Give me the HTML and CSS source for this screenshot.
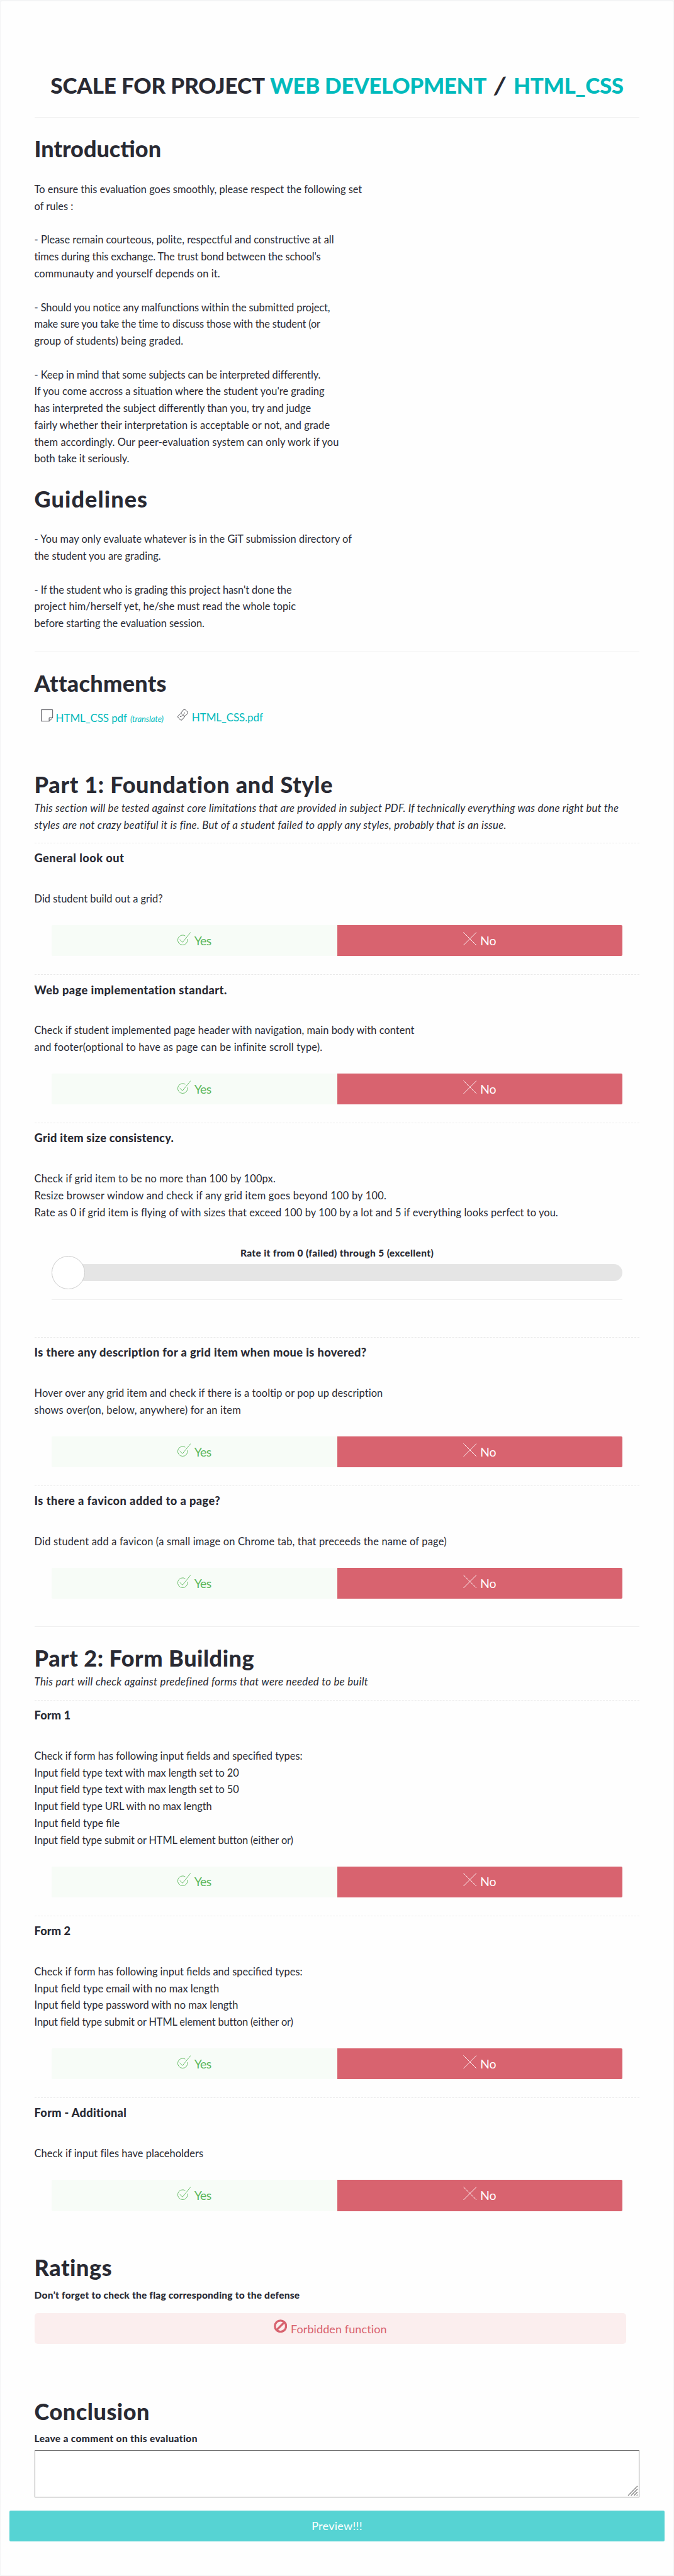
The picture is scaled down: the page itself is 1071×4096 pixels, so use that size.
FILE: index.html
```html
<!DOCTYPE html>
<html lang="en">
<head>
<meta charset="utf-8">
<title>Scale for project Web Development / HTML_CSS</title>
<link rel="stylesheet" href="styles.css">
</head>
<body>
<svg class="sprite" aria-hidden="true">
  <symbol id="i-check" viewBox="0 0 33 33"><path d="M19 9.3A12 12 0 1 0 24.4 17M5.5 18.5l6.8 6.6L32.2.6" /></symbol>
  <symbol id="i-cross" viewBox="0 0 33 33"><path d="M.6.6l31.8 31.8M32.4.6.6 32.4" /></symbol>
  <symbol id="i-note" viewBox="0 0 29 29"><path d="M.9.9h27v18.8l-8.4 8.4H.9zM19.5 28.1v-8.4h8.4" /></symbol>
  <symbol id="i-link" viewBox="0 0 28 28"><path d="M11.5 12.5l-1-1q-1.200-1.500 0-3L16 2q1.500-1.500 3.500 0L25 7.500q1.500 1.800 0 3.500l-5.500 5.800q-1.500 1.200-3 0l-1.300-1.200M16.500 15.500l1 1q1.200 1.500 0 3L12 26q-1.500 1.500-3.500 0L3 20.500q-1.500-1.800 0-3.500l5.500-5.800M9 17l-1 2.200M10 18.500l9-9.500" /></symbol>
  <symbol id="i-ban" viewBox="0 0 32 32"><circle cx="16" cy="16" r="13.300" /><path d="M6.800 25.200 25.200 6.800" /></symbol>
</svg>
<main class="sheet">
  <h1 class="title"><span class="t-a">SCALE FOR PROJECT</span><span class="accent t-b">WEB DEVELOPMENT</span><span class="slash">/</span><span class="accent t-c">HTML_CSS</span></h1>

  <section class="part ruled">
    <h2>Introduction</h2>
    <p class="text">To ensure this evaluation goes smoothly, please respect the following set<br>of rules :<br><br>- Please remain courteous, polite, respectful and constructive at all<br><span class="n10">times during this exchange. The trust bond between the school's</span><br><span class="w10">communauty and yourself depends on it.</span><br><br><span class="n10">- Should you notice any malfunctions within the submitted project,</span><br><span class="n20">make sure you take the time to discuss those with the student (or</span><br><span class="w15">group of students) being graded.</span><br><br><span class="n10">- Keep in mind that some subjects can be interpreted differently.</span><br>If you come accross a situation where the student you're grading<br>has interpreted the subject differently than you, try and judge<br><span class="w10">fairly whether their interpretation is acceptable or not, and grade</span><br><span class="w10">them accordingly. Our peer-evaluation system can only work if you</span><br><span class="n10">both take it seriously.</span></p>
    <h2 class="h-guidelines">Guidelines</h2>
    <p class="text"><span class="w05">- You may only evaluate whatever is in the GiT submission directory of</span><br>the student you are grading.<br><br><span class="n10">- If the student who is grading this project hasn't done the</span><br><span class="w05">project him/herself yet, he/she must read the whole topic</span><br><span class="n05">before starting the evaluation session.</span></p>
  </section>

  <section class="part ruled">
    <h2 class="h-short">Attachments</h2>
    <div class="files">
      <a class="file"><svg class="note"><use href="#i-note"/></svg>HTML_CSS pdf <em>(translate)</em></a>
      <a class="file"><svg class="link"><use href="#i-link"/></svg>HTML_CSS.pdf</a>
    </div>
  </section>

  <section class="part part-1">
    <h2 class="h-wide">Part 1: Foundation and Style</h2>
    <p class="lead">This section will be tested against core limitations that are provided in subject PDF. If technically everything was done right but the<br><span class="w25">styles are not crazy beatiful it is fine. But of a student failed to apply any styles, probably that is an issue.</span></p>

    <article class="item">
      <h3>General look out</h3>
      <p class="text">Did student build out a grid?</p>
      <div class="answer"><button class="yes"><svg><use href="#i-check"/></svg><span>Yes</span></button><button class="no"><svg><use href="#i-cross"/></svg><span>No</span></button></div>
    </article>
    <article class="item">
      <h3>Web page implementation standart.</h3>
      <p class="text"><span class="w05">Check if student implemented page header with navigation, main body with content</span><br><span class="w20">and footer(optional to have as page can be infinite scroll type).</span></p>
      <div class="answer"><button class="yes"><svg><use href="#i-check"/></svg><span>Yes</span></button><button class="no"><svg><use href="#i-cross"/></svg><span>No</span></button></div>
    </article>
    <article class="item">
      <h3 class="w25">Grid item size consistency.</h3>
      <p class="text"><span class="w15">Check if grid item to be no more than 100 by 100px.</span><br><span class="w25">Resize browser window and check if any grid item goes beyond 100 by 100.</span><br><span class="w10">Rate as 0 if grid item is flying of with sizes that exceed 100 by 100 by a lot and 5 if everything looks perfect to you.</span></p>
      <div class="rating">
        <div class="rating-label">Rate it from 0 (failed) through 5 (excellent)</div>
        <div class="track"><span class="knob"></span></div>
      </div>
    </article>
    <article class="item">
      <h3 class="w40">Is there any description for a grid item when moue is hovered?</h3>
      <p class="text"><span class="w10">Hover over any grid item and check if there is a tooltip or pop up description</span><br><span class="w20">shows over(on, below, anywhere) for an item</span></p>
      <div class="answer"><button class="yes"><svg><use href="#i-check"/></svg><span>Yes</span></button><button class="no"><svg><use href="#i-cross"/></svg><span>No</span></button></div>
    </article>
    <article class="item">
      <h3>Is there a favicon added to a page?</h3>
      <p class="text"><span class="w20">Did student add a favicon (a small image on Chrome tab, that preceeds the name of page)</span></p>
      <div class="answer"><button class="yes"><svg><use href="#i-check"/></svg><span>Yes</span></button><button class="no"><svg><use href="#i-cross"/></svg><span>No</span></button></div>
    </article>
  </section>

  <section class="part ruled part-2">
    <h2 class="h-mid">Part 2: Form Building</h2>
    <p class="lead"><span class="w30">This part will check against predefined forms that were needed to be built</span></p>

    <article class="item">
      <h3 class="w10">Form 1</h3>
      <p class="text">Check if form has following input fields and specified types:<br><span class="n10">Input field type text with max length set to 20</span><br><span class="n10">Input field type text with max length set to 50</span><br><span class="n10">Input field type URL with no max length</span><br>Input field type file<br><span class="n15">Input field type submit or HTML element button (either or)</span></p>
      <div class="answer"><button class="yes"><svg><use href="#i-check"/></svg><span>Yes</span></button><button class="no"><svg><use href="#i-cross"/></svg><span>No</span></button></div>
    </article>
    <article class="item">
      <h3 class="w10">Form 2</h3>
      <p class="text">Check if form has following input fields and specified types:<br>Input field type email with no max length<br>Input field type password with no max length<br><span class="n15">Input field type submit or HTML element button (either or)</span></p>
      <div class="answer"><button class="yes"><svg><use href="#i-check"/></svg><span>Yes</span></button><button class="no"><svg><use href="#i-cross"/></svg><span>No</span></button></div>
    </article>
    <article class="item">
      <h3 class="w30">Form - Additional</h3>
      <p class="text"><span class="w05">Check if input files have placeholders</span></p>
      <div class="answer"><button class="yes"><svg><use href="#i-check"/></svg><span>Yes</span></button><button class="no"><svg><use href="#i-cross"/></svg><span>No</span></button></div>
    </article>
  </section>

  <section class="part ratings">
    <h2 class="w55">Ratings</h2>
    <label class="hint w20">Don’t forget to check the flag corresponding to the defense</label>
    <div class="flag"><svg><use href="#i-ban"/></svg><span>Forbidden function</span></div>
  </section>

  <section class="part conclusion">
    <h2 class="w55">Conclusion</h2>
    <label class="hint" for="comment">Leave a comment on this evaluation</label>
    <div class="comment">
      <textarea id="comment"></textarea>
      <svg class="grip" viewBox="0 0 18 18"><path d="M1 17 17 1M6 17 17 6M11 17l6-6M15.500 17l1.500-1.500"/></svg>
    </div>
  </section>

  <button class="preview">Preview!!!</button>
</main>
</body>
</html>
```
FILE: styles.css
```css
* { box-sizing: border-box; }

body {
  margin: 0;
  background: #f5f6f7;
  font-family: Lato, sans-serif;
  font-size: 16.4px;
  line-height: 26.77px;
  color: #292a33;
}

h1, h2, h3, p { margin: 0; }

button, textarea {
  font: inherit;
  border: 0;
  padding: 0;
}

.sprite { position: absolute; width: 0; height: 0; }

.sheet {
  height: 4096px;
  border: 1px solid #f3f4f5;
  border-top-width: 2px;
  border-radius: 4px;
  background: #fefefe;
  padding: 113px 14px 0;
}

.title {
  display: flex;
  justify-content: center;
  height: 40px;
  font-size: 35px;
  font-weight: 900;
  line-height: 40px;
  white-space: nowrap;
}

.accent { color: #00babc; }
.t-a { letter-spacing: -0.15px; margin-right: 8px; }
.t-b { letter-spacing: -0.35px; }
.t-c { letter-spacing: -0.4px; }
.slash {
  width: 43px;
  text-align: center;
  font-size: 38px;
  transform: skewX(-7deg);
}

.part { margin: 0 39.6px; }

.ruled {
  margin-top: 31px;
  border-top: 1px solid #eee;
  padding-top: 29.3px;
}

h2 {
  height: 40px;
  font-size: 36px;
  font-weight: 900;
  line-height: 40px;
}

h2 + .text { margin-top: 31.9px; }
.h-guidelines { margin-top: 29.3px; letter-spacing: 1.1px; }
.h-short { letter-spacing: 0.3px; }
.h-wide { letter-spacing: 0.7px; }
.h-mid { letter-spacing: 0.5px; }

.text, .lead, h3 { white-space: nowrap; }

.files {
  display: flex;
  gap: 21px;
  margin-top: 22px;
  padding-left: 10.5px;
}

.file {
  display: flex;
  align-items: baseline;
  font-size: 17px;
  letter-spacing: -0.1px;
  color: #00babc;
}

.file em { margin-left: 5px; font-size: 13px; }

.file svg, .answer svg {
  fill: none;
  stroke-width: 1.4;
}

.file svg { stroke: #37383f; }
.note { width: 19.5px; height: 19.5px; margin-right: 4px; }
.link { width: 19px; height: 19px; margin-right: 5px; transform: translateY(-1px); }

.part-1 { margin-top: 70.2px; }

.lead {
  margin: 5.1px 0 14.6px;
  font-size: 16.8px;
  font-style: italic;
  letter-spacing: 0.2px;
}

.item {
  border-top: 1px dashed #e9e9e9;
  padding-top: 10.4px;
}

h3 {
  font-size: 18.2px;
  font-weight: 900;
  letter-spacing: 0.46px;
  line-height: 26.77px;
}

.item .text { margin-top: 38.1px; }

.answer {
  display: flex;
  margin: 28.3px 27.2px 28.7px;
  height: 49.2px;
  border-radius: 2px;
  overflow: hidden;
}

.answer button {
  display: flex;
  flex: 1;
  justify-content: center;
  padding-top: 10.6px;
  font-size: 19.5px;
}

.answer svg { width: 21.5px; height: 21.5px; margin-right: 5.5px; }
.answer span { padding-top: 1.2px; }
.yes { background: #f7fcf7; color: #5cb85c; letter-spacing: -0.6px; }
.yes svg { stroke: #5cb85c; }
.no { background: #d8636f; color: #fff; }
.no svg { stroke: #fff; }

.rating {
  margin: 40.2px 27.2px 58.5px;
  border-bottom: 1px solid #eee;
  padding-bottom: 29.5px;
}

.rating-label {
  height: 20px;
  text-align: center;
  font-size: 15.5px;
  font-weight: 900;
  letter-spacing: 0.35px;
  line-height: 20px;
}

.track {
  display: flex;
  align-items: center;
  height: 26.8px;
  margin-top: 8.3px;
  border-radius: 13.4px;
  background: #e5e5e5;
}

.knob {
  flex: none;
  width: 53.5px;
  height: 53.5px;
  border: 1.4px solid #ccc;
  border-radius: 50%;
  background: #fff;
}

.part-2 { margin-top: 43.4px; }
.part-1 .item:last-child .answer, .part-2 .item:last-child .answer { margin-bottom: 0; }

.ratings { margin-top: 69.8px; }

.hint {
  display: block;
  height: 20px;
  margin-top: 13.4px;
  font-size: 15.5px;
  font-weight: 900;
  letter-spacing: 0.35px;
  line-height: 20px;
}

.flag {
  display: flex;
  justify-content: center;
  width: 940px;
  height: 49.5px;
  margin-top: 18.9px;
  border-radius: 5px;
  background: #fbeeee;
  padding-top: 10.5px;
  font-size: 18px;
  letter-spacing: 0.1px;
  color: #d8636f;
}

.flag svg {
  width: 21.4px;
  height: 21.4px;
  margin-right: 6px;
  fill: none;
  stroke: #d8636f;
  stroke-width: 5;
}

.flag span { padding-top: 1.6px; }

.conclusion { margin-top: 86.5px; }

.comment { position: relative; height: 75.6px; margin-top: 8.9px; }

.comment textarea {
  display: block;
  width: 100%;
  height: 100%;
  border: 1.4px solid #8f8f8f;
  border-top-color: #6f6f6f;
  background: #fff;
  resize: none;
}

.grip {
  position: absolute;
  right: 2px;
  bottom: 2px;
  width: 17px;
  height: 17px;
  fill: none;
  stroke: #666;
  stroke-width: 1.2;
}

.preview {
  display: block;
  width: 100%;
  height: 49.2px;
  margin-top: 20.6px;
  border-radius: 2px;
  background: #56d3d3;
  font-size: 18px;
  letter-spacing: 0.28px;
  color: #fff;
}

/* Tracking steps, in hundredths of a pixel: n = narrower, w = wider */
.n20 { letter-spacing: -0.2px; }
.n15 { letter-spacing: -0.15px; }
.n10 { letter-spacing: -0.1px; }
.n05 { letter-spacing: -0.05px; }
.w05 { letter-spacing: 0.05px; }
.w10 { letter-spacing: 0.1px; }
.w15 { letter-spacing: 0.15px; }
.w20 { letter-spacing: 0.2px; }
.w25 { letter-spacing: 0.25px; }
.w30 { letter-spacing: 0.3px; }
.w40 { letter-spacing: 0.4px; }
.w55 { letter-spacing: 0.55px; }
```
